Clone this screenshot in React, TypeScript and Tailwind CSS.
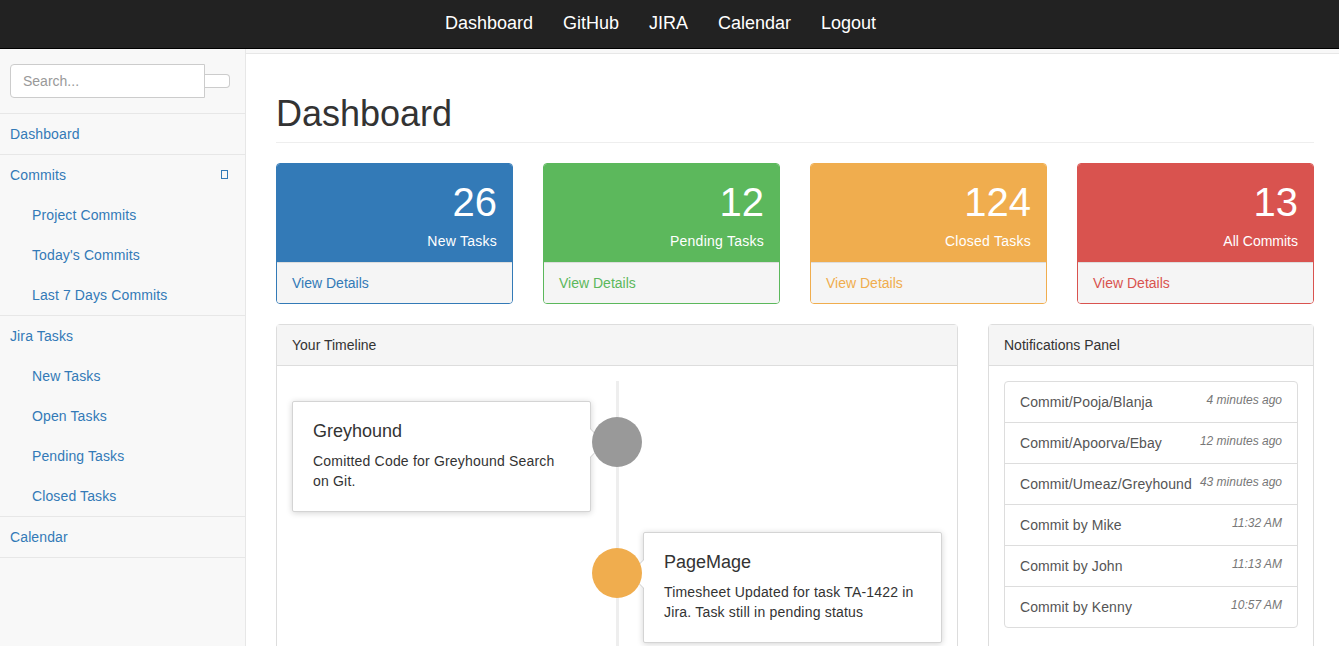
const NAV_LINKS = ['Dashboard', 'GitHub', 'JIRA', 'Calendar', 'Logout'];

const STATS = [
  { count: '26', label: 'New Tasks', track: 'tracking-[0.25px]', head: 'bg-[#337ab7]', border: 'border-[#337ab7]', link: 'text-[#337ab7]' },
  { count: '12', label: 'Pending Tasks', track: 'tracking-[0.25px]', head: 'bg-[#5cb85c]', border: 'border-[#5cb85c]', link: 'text-[#5cb85c]' },
  { count: '124', label: 'Closed Tasks', track: 'tracking-[0.25px]', head: 'bg-[#f0ad4e]', border: 'border-[#f0ad4e]', link: 'text-[#f0ad4e]' },
  { count: '13', label: 'All Commits', track: 'tracking-normal', head: 'bg-[#d9534f]', border: 'border-[#d9534f]', link: 'text-[#d9534f]' },
];

const NOTIFICATIONS = [
  ['Commit/Pooja/Blanja', '4 minutes ago'],
  ['Commit/Apoorva/Ebay', '12 minutes ago'],
  ['Commit/Umeaz/Greyhound', '43 minutes ago'],
  ['Commit by Mike', '11:32 AM'],
  ['Commit by John', '11:13 AM'],
  ['Commit by Kenny', '10:57 AM'],
];

function SideGroup({ title, items, caret }: { title: string; items?: string[]; caret?: boolean }) {
  return (
    <div className="border-b border-[#e7e7e7] tracking-[0.12px]">
      <a className="flex h-10 items-center justify-between pl-2.5 pr-[17px] text-[#337ab7]">
        {title}
        {caret && <span className="h-[9px] w-[7px] -translate-y-px border border-[#337ab7]" />}
      </a>
      {items?.map((item) => (
        <a key={item} className="flex h-10 items-center pl-8 text-[#337ab7]">
          {item}
        </a>
      ))}
    </div>
  );
}

function StatCard({ count, label, track, head, border, link }: (typeof STATS)[number]) {
  return (
    <div className={`flex-1 overflow-hidden rounded border ${border}`}>
      <div className={`h-[98px] px-[15px] pt-4 text-right text-white ${head}`}>
        <div className="text-[40px] leading-[44px]">{count}</div>
        <div className={`mt-[7px] leading-5 ${track}`}>{label}</div>
      </div>
      <div className={`h-[41px] border-t border-[#ddd] bg-[#f5f5f5] px-[15px] py-2.5 leading-5 ${link}`}>View Details</div>
    </div>
  );
}

function TimelineEntry({ title, text, side, badge }: { title: string; text: string; side: 'left' | 'right'; badge: string }) {
  const left = side === 'left';
  return (
    <div className={`relative flex ${left ? 'justify-start' : 'justify-end'}`}>
      <div className="relative h-[111px] w-[299px] rounded-[2px] border border-[#d4d4d4] bg-white px-5 pt-[19px] shadow-[0_1px_6px_rgba(0,0,0,0.175)]">
        <h4 className="mb-2.5 text-lg leading-5 text-[#333]">{title}</h4>
        <p className="leading-5 tracking-[0.19px] text-[#333]">{text}</p>
        {left ? (
          <>
            <span className="absolute top-[26px] right-[-15px] border-y-[15px] border-l-[15px] border-y-transparent border-l-[#ccc]" />
            <span className="absolute top-[27px] right-[-14px] border-y-[14px] border-l-[14px] border-y-transparent border-l-white" />
          </>
        ) : (
          <>
            <span className="absolute top-[26px] left-[-15px] border-y-[15px] border-r-[15px] border-y-transparent border-r-[#ccc]" />
            <span className="absolute top-[27px] left-[-14px] border-y-[14px] border-r-[14px] border-y-transparent border-r-white" />
          </>
        )}
      </div>
      <span className={`absolute top-4 left-[300px] z-10 size-[50px] rounded-full ${badge}`} />
    </div>
  );
}

export default function App() {
  return (
    <div className="flex h-[646px] flex-col overflow-hidden bg-[#f8f8f8] font-['Liberation_Sans',Arial,sans-serif] text-sm text-[#333]">
      <nav className="flex h-[49px] shrink-0 items-center justify-center gap-[30px] border-b border-black bg-[#222] pr-[18px] pb-0.5 text-lg text-white">
        {NAV_LINKS.map((link) => (
          <a key={link}>{link}</a>
        ))}
      </nav>

      <div className="flex min-h-0 flex-1">
        {/* Sidebar */}
        <aside className="w-[246px] shrink-0 border-r border-[#e7e7e7] bg-[#f8f8f8]">
          <div className="flex h-[65px] items-center border-b border-[#e7e7e7] pr-[15px] pl-2.5">
            <input
              placeholder="Search..."
              className="h-[34px] w-[195px] rounded-l border border-[#ccc] bg-white px-3 text-sm outline-none placeholder:text-[#999]"
            />
            <button className="h-[14px] w-[25px] rounded-r border border-l-0 border-[#ccc] bg-white" />
          </div>
          <SideGroup title="Dashboard" />
          <SideGroup title="Commits" caret items={['Project Commits', "Today's Commits", 'Last 7 Days Commits']} />
          <SideGroup title="Jira Tasks" items={['New Tasks', 'Open Tasks', 'Pending Tasks', 'Closed Tasks']} />
          <SideGroup title="Calendar" />
        </aside>

        {/* Page */}
        <main className="mt-1 min-w-0 flex-1 border-t border-[#e7e7e7] bg-white px-[30px] pr-[25px]">
          <h1 className="mt-10 mb-5 border-b border-[#eee] pb-2 text-4xl leading-[40px] text-[#333]">Dashboard</h1>

          <div className="mb-5 flex gap-[30px]">
            {STATS.map((s) => (
              <StatCard key={s.label} {...s} />
            ))}
          </div>

          <div className="flex gap-[30px]">
            <section className="w-[682px] shrink-0 rounded border border-[#ddd]">
              <div className="h-[41px] border-b border-[#ddd] bg-[#f5f5f5] px-[15px] py-2.5 leading-5">Your Timeline</div>
              <div className="relative flex flex-col gap-5 px-[15px] pt-[35px] pb-5">
                <span className="absolute top-[15px] bottom-0 left-[339px] w-[3px] bg-[#eee]" />
                <TimelineEntry
                  side="left"
                  badge="bg-[#999]"
                  title="Greyhound"
                  text="Comitted Code for Greyhound Search on Git."
                />
                <TimelineEntry
                  side="right"
                  badge="bg-[#f0ad4e]"
                  title="PageMage"
                  text="Timesheet Updated for task TA-1422 in Jira. Task still in pending status"
                />
              </div>
            </section>

            <section className="min-w-0 flex-1 rounded border border-[#ddd]">
              <div className="h-[41px] border-b border-[#ddd] bg-[#f5f5f5] px-[15px] py-2.5 leading-5">Notifications Panel</div>
              <div className="p-[15px]">
                <ul className="rounded border border-[#ddd]">
                  {NOTIFICATIONS.map(([name, time]) => (
                    <li key={name} className="flex h-[41px] justify-between border-b border-[#ddd] px-[15px] py-2.5 leading-5 text-[#555] last:h-10 last:border-b-0">
                      <span className="tracking-[0.1px]">{name}</span>
                      <em className="text-xs leading-[17px] text-[#777]">{time}</em>
                    </li>
                  ))}
                </ul>
              </div>
            </section>
          </div>
        </main>
      </div>
    </div>
  );
}
